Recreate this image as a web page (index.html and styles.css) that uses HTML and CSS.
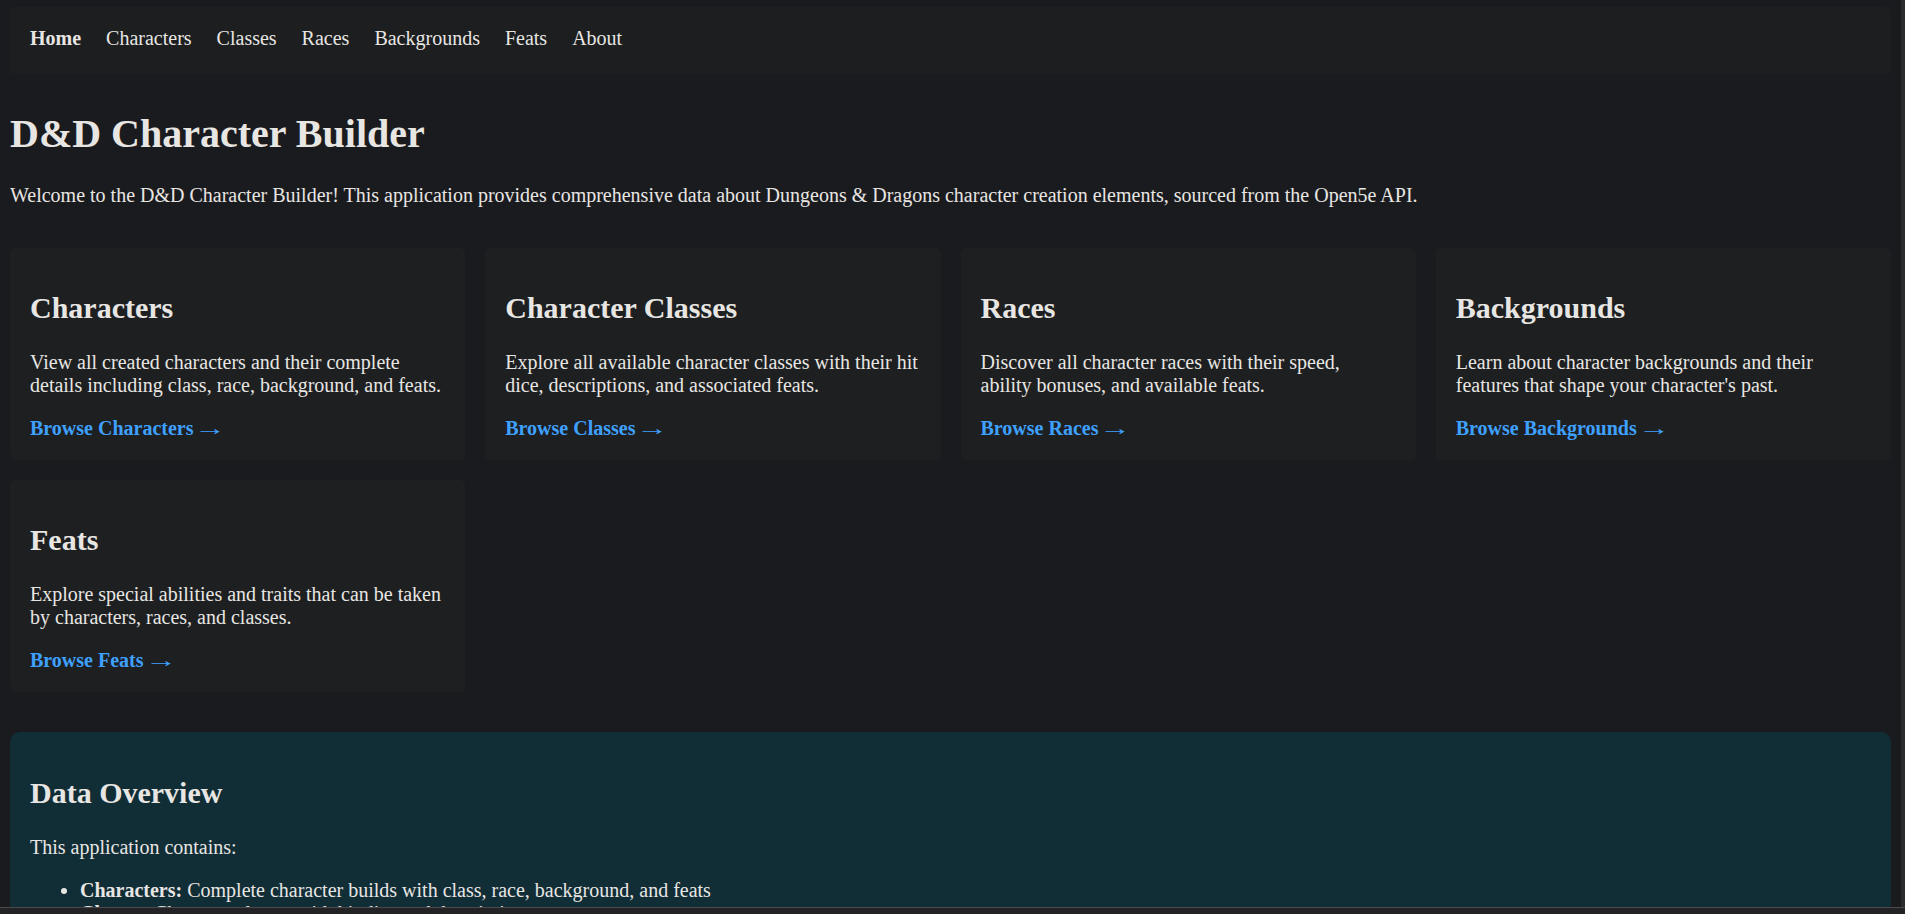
FILE: index.html
```html
<!DOCTYPE html>
<html lang="en">
<head>
<meta charset="utf-8">
<title>D&amp;D Character Builder</title>
<link rel="stylesheet" href="styles.css">
</head>
<body>
<nav class="nav">
  <a class="nav-link active" href="#">Home</a>
  <a class="nav-link" href="#">Characters</a>
  <a class="nav-link" href="#">Classes</a>
  <a class="nav-link" href="#">Races</a>
  <a class="nav-link" href="#">Backgrounds</a>
  <a class="nav-link" href="#">Feats</a>
  <a class="nav-link" href="#">About</a>
</nav>
<main class="main">
  <h1 class="title">D&amp;D Character Builder</h1>
  <p class="intro">Welcome to the D&amp;D Character Builder! This application provides comprehensive data about Dungeons &amp; Dragons character creation elements, sourced from the Open5e API.</p>

  <div class="cards">
    <div class="card">
      <h2 class="card-title">Characters</h2>
      <p class="card-text">View all created characters and their complete details including class, race, background, and feats.</p>
      <a class="card-link" href="#">Browse Characters<span class="arrow">→</span></a>
    </div>
    <div class="card">
      <h2 class="card-title">Character Classes</h2>
      <p class="card-text">Explore all available character classes with their hit dice, descriptions, and associated feats.</p>
      <a class="card-link" href="#">Browse Classes<span class="arrow">→</span></a>
    </div>
    <div class="card">
      <h2 class="card-title">Races</h2>
      <p class="card-text">Discover all character races with their speed, ability bonuses, and available feats.</p>
      <a class="card-link" href="#">Browse Races<span class="arrow">→</span></a>
    </div>
    <div class="card">
      <h2 class="card-title">Backgrounds</h2>
      <p class="card-text">Learn about character backgrounds and their features that shape your character's past.</p>
      <a class="card-link" href="#">Browse Backgrounds<span class="arrow">→</span></a>
    </div>
    <div class="card">
      <h2 class="card-title">Feats</h2>
      <p class="card-text">Explore special abilities and traits that can be taken by characters, races, and classes.</p>
      <a class="card-link" href="#">Browse Feats<span class="arrow">→</span></a>
    </div>
  </div>

  <section class="overview">
    <h2 class="overview-title">Data Overview</h2>
    <p class="overview-text">This application contains:</p>
    <ul class="overview-list">
      <li><strong>Characters:</strong> Complete character builds with class, race, background, and feats</li>
      <li><strong>Classes:</strong> Character classes with hit dice and descriptions</li>
      <li><strong>Races:</strong> Playable races with speed and ability bonuses</li>
      <li><strong>Backgrounds:</strong> Character backgrounds and their features</li>
      <li><strong>Feats:</strong> Special abilities and traits</li>
    </ul>
  </section>
</main>
<div class="scroll-v"></div>
<div class="scroll-h"></div>
</body>
</html>
```

FILE: styles.css
```css
html {
  background: #1a1b1e;
}

body {
  margin: 7px 14px 10px 10px;
  background: #1a1b1e;
  color: #e8e6e3;
  font-family: "Liberation Serif", "Times New Roman", serif;
  font-size: 20px;
  line-height: 23px;
}

.nav {
  display: flex;
  gap: 25px;
  padding: 20px 20px 24px;
  background: #1c1e20;
  border-radius: 5px;
  margin-bottom: 37px;
}

.nav-link {
  color: #e8e6e3;
  text-decoration: none;
}

.nav-link.active {
  font-weight: bold;
}

.title {
  font-size: 40px;
  line-height: 46px;
  margin: 26.8px 0;
}

.intro {
  margin: 20px 0;
}

.cards {
  display: grid;
  grid-template-columns: repeat(4, 1fr);
  gap: 20px;
  margin-top: 41px;
}

.card {
  background: #1d1f21;
  border-radius: 5px;
  padding: 20px;
}

.card-title {
  font-size: 30px;
  line-height: 34.5px;
  margin: 23.5px 0 24.9px;
}

.card-text {
  margin: 20px 0;
}

.card-link {
  color: #3fa1ff;
  font-weight: bold;
  text-decoration: none;
}

.arrow {
  display: inline-block;
  font-weight: normal;
  transform: scaleX(1.6);
  transform-origin: left center;
  margin-left: 1px;
}

.overview {
  margin-top: 40px;
  background: #112d36;
  border-radius: 10px;
  padding: 20px;
}

.overview-title {
  font-size: 30px;
  line-height: 34.5px;
  margin: 24.9px 0;
}

.overview-text {
  margin: 20px 0;
}

.overview-list {
  margin: 20px 0;
  padding-left: 50px;
}

.scroll-v {
  position: fixed;
  top: 0;
  right: 0;
  bottom: 7px;
  width: 4px;
  background: #2c2c2e;
}

.scroll-h {
  position: fixed;
  left: 0;
  right: 0;
  bottom: 0;
  height: 6px;
  background: #232325;
  border-top: 1px solid #4a4a4c;
}
```
